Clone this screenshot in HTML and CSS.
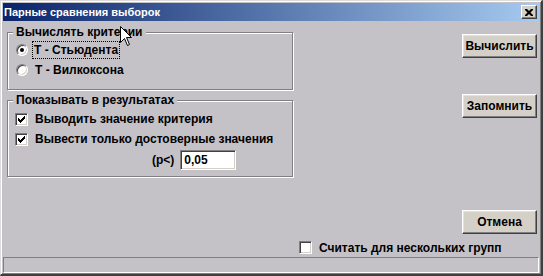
FILE: index.html
```html
<!DOCTYPE html>
<html lang="ru">
<head>
    <meta charset="UTF-8">
    <title>Парные сравнения выборок</title>
    <link rel="stylesheet" href="styles.css">
</head>
<body>

<div class="window">
    <div class="titlebar">
        <span class="title">Парные сравнения выборок</span>
        <span class="close">
            <svg width="8" height="7" viewBox="0 0 8 7"><path d="M0 0h2l2 2 2-2h2v1l-2.5 2.5L8 6v1H6L4 5 2 7H0V6l2.5-2.5L0 1z" fill="#000"/></svg>
        </span>
    </div>

    <div class="main">
        <div class="left">
            <div class="group group-calc">
                <span class="group-title">Вычислять критерии</span>
                <div class="row">
                    <span class="radio checked"></span>
                    <span class="label focused">T - Стьюдента</span>
                </div>
                <div class="row">
                    <span class="radio"></span>
                    <span class="label">T - Вилкоксона</span>
                </div>
            </div>

            <div class="group group-show">
                <span class="group-title">Показывать в результатах</span>
                <div class="row">
                    <span class="check checked">
                        <svg width="7" height="7" viewBox="0 0 7 7"><path d="M0 2h1v1h1v1h1V3h1V2h1V1h1V0h1v3H6v1H5v1H4v1H3v1H2V6H1V5H0z" fill="#000"/></svg>
                    </span>
                    <span class="label">Выводить значение критерия</span>
                </div>
                <div class="row">
                    <span class="check checked">
                        <svg width="7" height="7" viewBox="0 0 7 7"><path d="M0 2h1v1h1v1h1V3h1V2h1V1h1V0h1v3H6v1H5v1H4v1H3v1H2V6H1V5H0z" fill="#000"/></svg>
                    </span>
                    <span class="label">Вывести только достоверные значения</span>
                </div>
                <div class="row row-p">
                    <span class="label">(p&lt;)</span>
                    <span class="field">0,05</span>
                </div>
            </div>
        </div>

        <div class="right">
            <button class="btn btn-calc">Вычислить</button>
            <button class="btn btn-save">Запомнить</button>
            <button class="btn btn-cancel">Отмена</button>
        </div>
    </div>

    <div class="footer">
        <span class="check"></span>
        <span class="label">Считать для нескольких групп</span>
    </div>

    <div class="status"></div>

    <svg class="cursor" width="13" height="21" viewBox="0 0 13 21">
        <path d="M0.5 0.5V16.5L4.5 12.5L7.5 19.5L9.5 18.5L6.5 11.5H11.5Z" fill="#fff" stroke="#000" stroke-width="1"/>
    </svg>
</div>

</body>
</html>
```

FILE: styles.css
```css
body {
    margin: 0;
    font-family: "Liberation Sans", Arial, sans-serif;
    font-size: 12px;
    font-weight: bold;
    color: #000;
}
.window {
    position: relative;
    box-sizing: border-box;
    width: 543px;
    height: 276px;
    display: flex;
    flex-direction: column;
    background: #c4c2c7;
    border-style: solid;
    border-width: 1px 2px 2px 1px;
    border-color: #dcdcdc #404040 #404040 #dcdcdc;
    box-shadow: inset 1px 1px 0 #fff, inset -1px -1px 0 #808080;
    padding: 2px 2px 1px 2px;
}
.titlebar {
    height: 18px;
    display: flex;
    align-items: center;
    justify-content: space-between;
    background: linear-gradient(to right, #0a246a, #a6caf0);
    padding: 0 2px 0 1px;
}
.title {
    color: #fff;
    font-size: 11px;
    line-height: 18px;
}
.close {
    box-sizing: border-box;
    width: 16px;
    height: 14px;
    display: flex;
    align-items: center;
    justify-content: center;
    background: #d4d0c8;
    border: 1px solid;
    border-color: #fff #404040 #404040 #fff;
    box-shadow: inset -1px -1px 0 #808080;
}
.main {
    display: flex;
    justify-content: space-between;
}
.left {
    width: 286px;
    margin: 11px 0 0 4px;
}
.group {
    display: flex;
    flex-direction: column;
    border: 1px solid #808080;
    box-shadow: inset 1px 1px 0 #fff, 1px 1px 0 #fff;
}
.group-title {
    align-self: flex-start;
    margin: -8px 0 0 5px;
    padding: 0 3px;
    line-height: 14px;
    background: #c4c2c7;
}
.group-calc {
    padding-bottom: 9px;
}
.group-calc .row:first-of-type {
    margin-top: 1px;
}
.group-show {
    margin-top: 10px;
    padding-bottom: 6px;
}
.group-show .row:first-of-type {
    margin-top: 2px;
}
.row {
    height: 20px;
    display: flex;
    align-items: center;
    padding-left: 8px;
}
.label {
    line-height: 14px;
    white-space: nowrap;
}
.focused {
    outline: 1px dotted #000;
    outline-offset: 0;
    padding: 1px 1px;
    margin-left: -2px;
}
.radio {
    box-sizing: border-box;
    width: 12px;
    height: 12px;
    border-radius: 50%;
    background: #fff;
    border: 1px solid;
    border-color: #808080 #fff #fff #808080;
    box-shadow: inset 1px 1px 0 #404040, inset -1px -1px 0 #d4d0c8;
    margin-right: 7px;
    display: flex;
    align-items: center;
    justify-content: center;
}
.radio.checked::after {
    content: "";
    width: 4px;
    height: 4px;
    border-radius: 50%;
    background: #000;
}
.check {
    box-sizing: border-box;
    width: 13px;
    height: 13px;
    background: #fff;
    border: 1px solid;
    border-color: #808080 #fff #fff #808080;
    box-shadow: inset 1px 1px 0 #404040, inset -1px -1px 0 #d4d0c8;
    margin: 0 7px 0 -1px;
    display: flex;
    align-items: center;
    justify-content: center;
}
.check svg {
    display: block;
}
.row-p {
    margin-top: 1px;
    padding-left: 144px;
}
.field {
    box-sizing: border-box;
    width: 56px;
    height: 20px;
    margin-left: 6px;
    padding: 2px 3px;
    line-height: 14px;
    background: #fff;
    border: 1px solid;
    border-color: #808080 #fff #fff #808080;
    box-shadow: inset 1px 1px 0 #404040, inset -1px -1px 0 #d4d0c8;
}
.right {
    display: flex;
    flex-direction: column;
    margin-right: 2px;
}
.btn {
    box-sizing: border-box;
    width: 75px;
    height: 24px;
    padding: 0;
    font: inherit;
    color: #000;
    background: #d4d0c8;
    border: 1px solid;
    border-color: #fff #404040 #404040 #fff;
    box-shadow: inset -1px -1px 0 #808080, inset 1px 1px 0 #e4e2de;
}
.btn-calc {
    margin-top: 13px;
}
.btn-save {
    margin-top: 36px;
}
.btn-cancel {
    margin-top: 92px;
}
.footer {
    display: flex;
    align-items: center;
    height: 13px;
    margin-top: 7px;
    padding-left: 297px;
}
.status {
    margin-top: auto;
    height: 16px;
    box-sizing: border-box;
    border: 1px solid;
    border-color: #808080 #fff #fff #808080;
}
.cursor {
    position: absolute;
    left: 119px;
    top: 25px;
}
```
